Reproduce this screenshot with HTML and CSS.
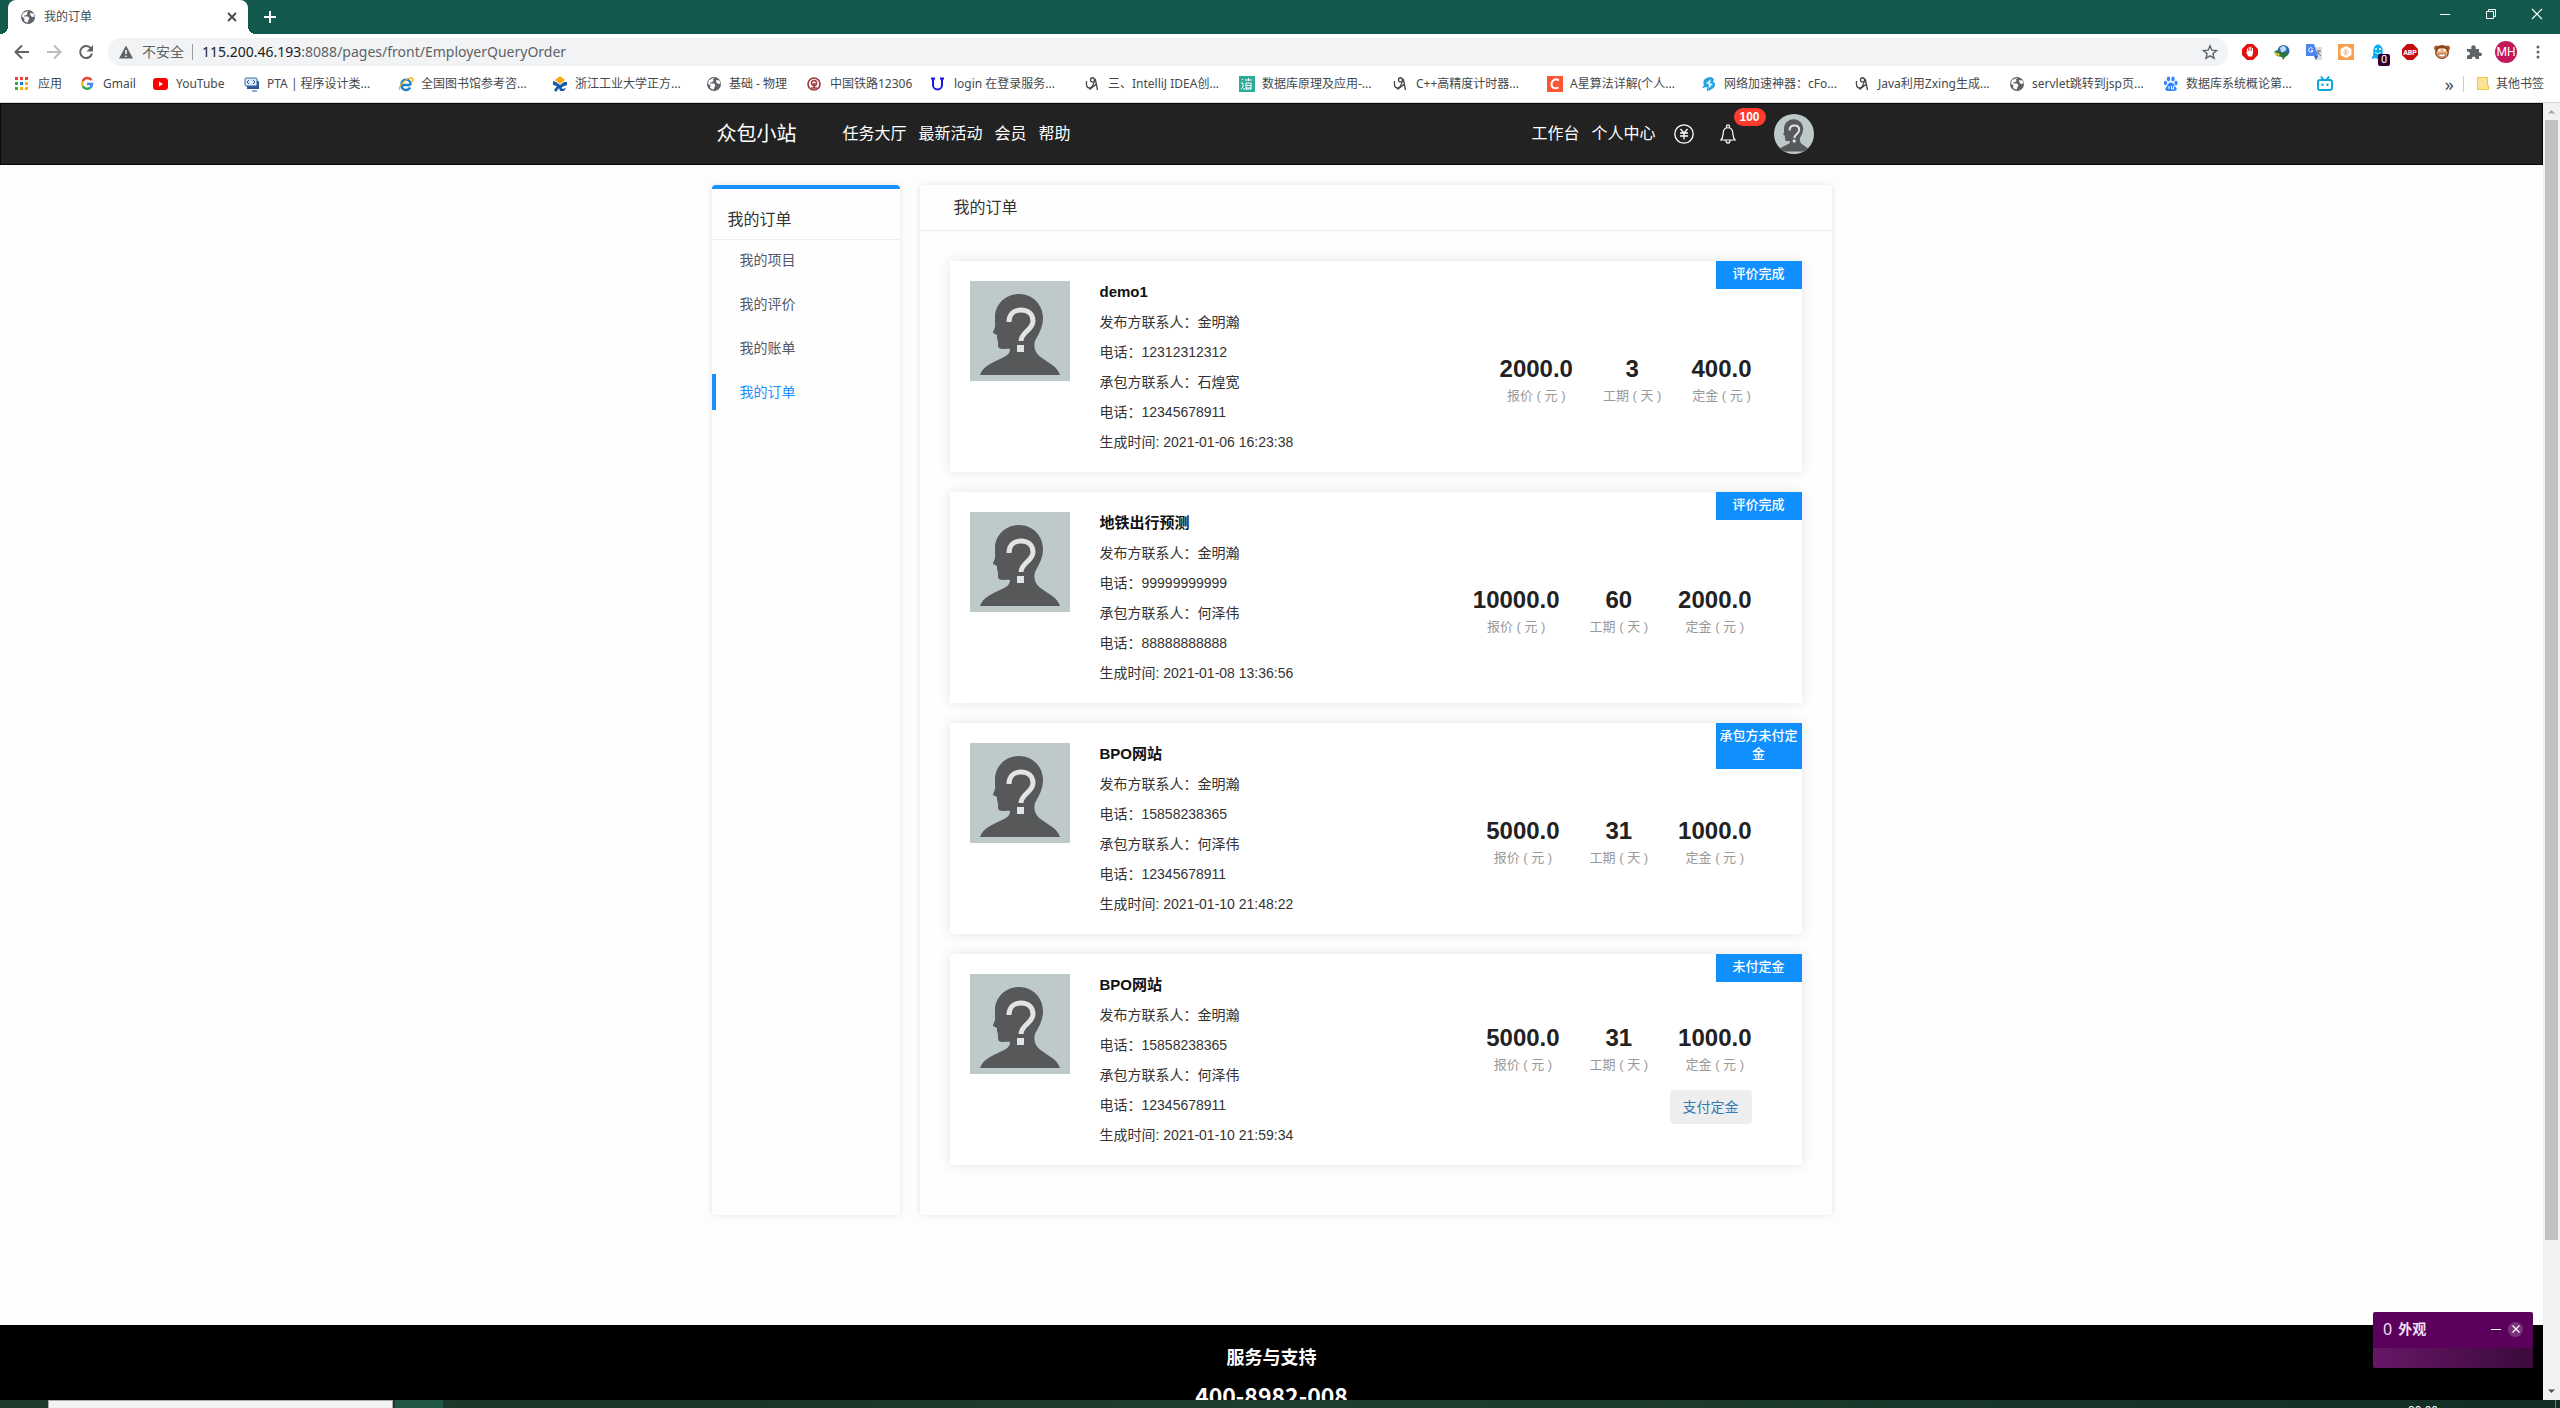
FILE: index.html
```html
<!DOCTYPE html>
<html lang="zh-CN">
<head>
<meta charset="utf-8">
<title>我的订单</title>
<link rel="stylesheet" href="styles.css">
</head>
<body>
<svg class="defs" aria-hidden="true">
  <symbol id="person" viewBox="0 0 100 100">
    <rect width="100" height="100" fill="#becaca"/>
    <path d="M49 13C63 13 73 24 73 37C73 47 68 54 65 60C63 67 66 73 72 77C80 83 87 85 90 94H10C13 85 22 82 32 77C38 74 40 72 40 68C38 67 32 69 29 67C27 65 29 62 27 57L27 54L23 52C23 49 26 47 25 42L25 36C25 24 35 13 49 13z" fill="#57585a"/>
    <path d="M39 41c0-8 5-12 12-12s12 4 12 11c0 9-12 11-12 20" fill="none" stroke="#e2e3e5" stroke-width="5"/>
    <rect x="47" y="64" width="7" height="7" fill="#e2e3e5"/>
  </symbol>
  <symbol id="globe" viewBox="0 0 16 16">
    <circle cx="8" cy="8" r="7" fill="#5f6368"/>
    <path d="M8.500 1.600L7 3.500 7.500 5 5.500 6.500 4 6.500 4 7.500 8 7.500 9.500 9.500 8.500 11 7.500 13.800 4 12 4.500 9.500 1.800 7.500 3 4 5.500 3z M10 4l3.500.5 1 3L12 8l-1.500-1.500z" fill="#fff"/>
  </symbol>
  <symbol id="script" viewBox="0 0 16 16">
    <path d="M1.500 5c-.5 5 .5 7 3 7s4.500-4 5-8c0-3-4-3-4 0 0 2.500 3.500 2.500 5 0l2 10M4.500 13.500l7-5.500" fill="none" stroke="#444" stroke-width="1.300"/>
  </symbol>
</svg>

<header class="tabs">
  <div class="tab">
    <svg class="i16"><use href="#globe"/></svg>
    <span class="tab-title">我的订单</span>
    <button class="plain" aria-label="关闭标签页"><svg class="i16" viewBox="0 0 16 16"><path d="M4 4l8 8M12 4l-8 8" stroke="#45494d" stroke-width="1.800"/></svg></button>
  </div>
  <button class="plain" aria-label="新标签页"><svg class="i16" viewBox="0 0 16 16"><path d="M8 2v12M2 8h12" stroke="#fff" stroke-width="2"/></svg></button>
  <div class="win">
    <button class="plain" aria-label="最小化"><svg viewBox="0 0 12 12"><path d="M1 6.500h10" stroke="#fff"/></svg></button>
    <button class="plain" aria-label="还原"><svg viewBox="0 0 12 12"><path d="M1.500 3.500h7v7h-7zM3.500 3.500v-2h7v7h-2" fill="none" stroke="#fff"/></svg></button>
    <button class="plain" aria-label="关闭"><svg viewBox="0 0 12 12"><path d="M1 1l10 10M11 1L1 11" stroke="#fff" stroke-width="1.200"/></svg></button>
  </div>
</header>

<div class="toolbar">
  <button class="plain nav" aria-label="后退"><svg class="i16" viewBox="0 0 16 16"><path d="M15 8H2M8 1.500L1.500 8 8 14.500" fill="none" stroke="#5f6368" stroke-width="2"/></svg></button>
  <button class="plain nav" aria-label="前进"><svg class="i16" viewBox="0 0 16 16"><path d="M1 8h13M8 1.500L14.500 8 8 14.500" fill="none" stroke="#babcbe" stroke-width="2"/></svg></button>
  <button class="plain nav" aria-label="刷新"><svg class="i16" viewBox="0 0 16 16"><path d="M13 4.500A6 6 0 1 0 14 9.500" fill="none" stroke="#5f6368" stroke-width="2"/><path d="M15 1v6.500H8.500z" fill="#5f6368"/></svg></button>
  <div class="omnibox">
    <svg class="i16" viewBox="0 0 16 16"><path d="M8 1.500L15 14.500H1z" fill="#5f6368"/><path d="M8 6v4M8 11.500v1.500" stroke="#fff" stroke-width="1.500"/></svg>
    <span class="insecure">不安全</span>
    <span class="url"><b>115.200.46.193</b>:8088/pages/front/EmployerQueryOrder</span>
    <svg class="i16" viewBox="0 0 16 16"><path d="M8 1.800l1.800 4.400 4.700.4-3.600 3.100 1.100 4.600-4-2.500-4 2.500 1.100-4.600L1.500 6.600l4.700-.4z" fill="none" stroke="#5f6368" stroke-width="1.400"/></svg>
  </div>
  <div class="exts">
    <svg class="i16" viewBox="0 0 16 16"><path d="M5 0h6l5 5v6l-5 5H5l-5-5V5z" fill="#e3120f"/><path d="M5 8V4.500h1V7h.7V3h1v4h.6V2.800h1V7h.7V4h1v5l-1 3.500H6.500L4 8.500z" fill="#fff"/></svg>
    <svg class="i16" viewBox="0 0 16 16"><circle cx="9.500" cy="7" r="6" fill="#3567b0"/><path d="M6 4c3-3 5-2 6 0s-1 4-5 4z" fill="#b9dff0"/><path d="M0 8c3-3 5-2 6 1l9-1-6 8-1-3-5-1z" fill="#2a7a30"/><path d="M1 8l5 2-1 2-4-1z" fill="#e8b832"/></svg>
    <svg class="i16" viewBox="0 0 16 16"><path d="M6 3h10v13H9z" fill="#dadce0"/><path d="M0 0h8l4 12H0z" fill="#4a85f0"/><path d="M8 12h4l-2 4z" fill="#3566c8"/><path d="M6.500 4.500A2.200 2.200 0 1 0 7 6.500H5" fill="none" stroke="#fff"/><path d="M11 7h4M13 6v1c0 2-1 3-2 4m0-3l4 4" stroke="#70777f" fill="none"/></svg>
    <svg class="i16" viewBox="0 0 16 16"><rect width="16" height="16" fill="#f9a14a"/><path d="M8 2l5.500 3v6L8 14l-5.500-3V5z" fill="#fff"/><path d="M5 9l5-3M6 11l5-3M7 5l1 6" stroke="#f2b577"/></svg>
    <span class="ghost"><svg class="i16" viewBox="0 0 16 16"><path d="M2 13c2-1 1-6 1.500-8 1-6 8-6 9 0 .5 3-.5 7 1.500 8v2l-3-1-3 1-3-1-3 1z" fill="#0aaef2"/><circle cx="6" cy="5" r="1" fill="#fff"/><circle cx="10" cy="5" r="1" fill="#fff"/><path d="M5 8c2 2 4 2 6 0" stroke="#fff" fill="none"/></svg><i>0</i></span>
    <svg class="i16" viewBox="0 0 16 16"><path d="M5 0h6l5 5v6l-5 5H5l-5-5V5z" fill="#c70d0b"/><text x="8" y="10.500" text-anchor="middle" class="abp">ABP</text></svg>
    <svg class="i16" viewBox="0 0 16 16"><circle cx="2.500" cy="4" r="2.500" fill="#b3602b"/><circle cx="13.500" cy="4" r="2.500" fill="#b3602b"/><circle cx="8" cy="8" r="7" fill="#8a4520"/><ellipse cx="8" cy="9" rx="5.500" ry="5" fill="#f0b07a"/><circle cx="5.500" cy="6" r="1.300" fill="#fff"/><circle cx="10.500" cy="6" r="1.300" fill="#fff"/><path d="M4 10h8c-1 4-7 4-8 0z" fill="#fff" stroke="#5a2b12" stroke-width=".6"/></svg>
    <svg class="i16" viewBox="0 0 16 16"><path d="M1 5h4.500C4 0 11 0 9.500 5H13v3.500c4-1 4 4.500 0 3.500V15H9.500c.5-3.500-4-3.500-3.500 0H1v-3.500c4 0 4-4 0-4z" fill="#5f6368"/></svg>
    <span class="account">MH</span>
    <svg class="i16" viewBox="0 0 16 16"><g fill="#5f6368"><circle cx="8" cy="3" r="1.500"/><circle cx="8" cy="8" r="1.500"/><circle cx="8" cy="13" r="1.500"/></g></svg>
  </div>
</div>

<nav class="bookmarks">
  <a href="#" class="w1"><svg class="i16" viewBox="0 0 16 16"><g fill="#ea4335"><path d="M0 1h3v3H0zM5 1h3v3H5zM10 1h3v3h-3z"/></g><path d="M0 6h3v3H0z" fill="#34a853"/><path d="M5 6h3v3H5z" fill="#1a73e8"/><path d="M10 6h3v3h-3zM5 11h3v3H5zM10 11h3v3h-3z" fill="#fbad05"/><path d="M0 11h3v3H0z" fill="#34a853"/></svg>应用</a>
  <a href="#" class="w2"><svg class="i16" viewBox="0 0 16 16" fill="none" stroke-width="2.400"><path d="M11.500 4A5 5 0 0 0 2.700 5.500" stroke="#ea4335"/><path d="M2.700 5.500a5 5 0 0 0 0 4.500" stroke="#fbbc05"/><path d="M2.700 10a5 5 0 0 0 7.500 1.800" stroke="#34a853"/><path d="M10.200 11.800A5 5 0 0 0 12 8H7" stroke="#4285f4"/></svg>Gmail</a>
  <a href="#" class="w3"><svg class="i16" viewBox="0 0 16 16"><rect y="2" width="15" height="12" rx="3" fill="#f00"/><path d="M6 5.500v5L10 8z" fill="#fff"/></svg>YouTube</a>
  <a href="#" class="wide"><svg class="i16" viewBox="0 0 16 16"><rect x="3" y="5" width="12" height="8" fill="#2c5792"/><rect x="1" y="2" width="12" height="8" rx="1" fill="#dce8f5" stroke="#3a6ba8"/><path d="M5 4L3 6l2 2M9 4l2 2-2 2M8 15h5" stroke="#2c5792" fill="none"/></svg>PTA | 程序设计类...</a>
  <a href="#" class="wide"><svg class="i16" viewBox="0 0 16 16" fill="none"><path d="M12.500 9H3.500A4.500 4.500 0 0 1 12.500 7.500V9M12 11.500a4.500 4.500 0 0 1-8.500-2" stroke="#1e7fd0" stroke-width="2.400"/><path d="M2 14C-1 11 9 1 14 2c2 1 0 4-1 5" stroke="#f0b323" stroke-width="1.400"/></svg>全国图书馆参考咨...</a>
  <a href="#" class="wide"><svg class="i16" viewBox="0 0 16 16"><path d="M8 0l5 4-5 4-5-4z" fill="#f8ab13"/><path d="M1 5l3 1 4 3 4-3 3 0v3l-5 2v2l4-1-2 3-4 0-1-3-3 4-2-2 3-4-4-1z" fill="#145ba9"/></svg>浙江工业大学正方...</a>
  <a href="#" class="w4"><svg class="i16"><use href="#globe"/></svg>基础 - 物理</a>
  <a href="#" class="w5"><svg class="i16" viewBox="0 0 16 16" fill="none" stroke="#a13b42" stroke-width="1.700"><circle cx="7" cy="8" r="6"/><circle cx="7" cy="7" r="2.500"/><path d="M7 7v5M4 12h6"/></svg>中国铁路12306</a>
  <a href="#" class="wide"><svg class="i16" viewBox="0 0 16 16"><path d="M2 2v7c0 6 9 6 9 0V2M0 2.500h4M9 2.500h4" fill="none" stroke="#1417e8" stroke-width="2"/></svg>login 在登录服务...</a>
  <a href="#" class="wide"><svg class="i16"><use href="#script"/></svg>三、IntelliJ IDEA创...</a>
  <a href="#" class="wide"><svg class="i16" viewBox="0 0 16 16"><rect width="16" height="16" fill="#2dab98"/><path d="M6 4h7M7 7h5v5H7zM9.500 2v3M7 9.500h5M3 3l1 1M2 7h2v4l-2 2M4 13h9" fill="none" stroke="#fff"/></svg>数据库原理及应用-...</a>
  <a href="#" class="wide"><svg class="i16"><use href="#script"/></svg>C++高精度计时器...</a>
  <a href="#" class="wide"><svg class="i16" viewBox="0 0 16 16"><rect width="16" height="16" fill="#fc5531"/><path d="M12 4.500C8 2 5 4 4.500 8c0 4 3 5 7 3.500" fill="none" stroke="#fff" stroke-width="2"/></svg>A星算法详解(个人...</a>
  <a href="#" class="wide"><svg class="i16" viewBox="0 0 16 16"><path d="M10 1C4 1 1 5 3 9l-2 3 5-1 0 4c5-1 9-4 8-8L12 6l1-3z" fill="#24a3e3"/><path d="M5 7l5-4-1 4 3 1-5 5 1-4z" fill="#c9f1ff"/></svg>网络加速神器：cFo...</a>
  <a href="#" class="wide"><svg class="i16"><use href="#script"/></svg>Java利用Zxing生成...</a>
  <a href="#" class="wide"><svg class="i16"><use href="#globe"/></svg>servlet跳转到jsp页...</a>
  <a href="#" class="wide"><svg class="i16" viewBox="0 0 16 16" fill="#3385ff"><ellipse cx="5.500" cy="3" rx="1.700" ry="2.400"/><ellipse cx="10" cy="3" rx="1.700" ry="2.400"/><ellipse cx="2.500" cy="7" rx="1.600" ry="2.200"/><ellipse cx="13" cy="7" rx="1.600" ry="2.200"/><path d="M8 6.500c3 0 3 3 5 5s0 4-5 3.500c-5 .5-7-1-5-3.500s2-5 5-5z"/><path d="M6 10v3M8.500 10v3h2v-3" fill="none" stroke="#fff"/></svg>数据库系统概论第...</a>
  <a href="#" aria-label="bilibili"><svg class="i16" viewBox="0 0 16 16" fill="none" stroke="#0ca6dd" stroke-width="2"><rect x="1" y="4" width="14" height="10" rx="2"/><path d="M4 .5L6.500 4M12 .5L9.500 4M5.500 7.500V10M10.500 7.500V10"/></svg></a>
  <span class="more">»</span>
  <a href="#" class="others"><svg class="i16" viewBox="0 0 16 16"><path d="M2.500 1.500h10v8h1v4h-11z" fill="#fde293" stroke="#f0c83c"/></svg>其他书签</a>
</nav>

<div class="window">
  <div class="page">
    <header class="site">
      <div class="wrap">
        <a href="#" class="brand">众包小站</a>
        <nav class="links"><a href="#">任务大厅</a><a href="#">最新活动</a><a href="#">会员</a><a href="#">帮助</a></nav>
        <nav class="links user"><a href="#">工作台</a><a href="#">个人中心</a></nav>
        <a href="#" class="coin" aria-label="钱包"><svg viewBox="0 0 20 20" fill="none" stroke="#fff" stroke-width="1.300"><circle cx="10" cy="10" r="9.200"/><path d="M6.500 5L10 9l3.500-4M6 9h8M6 12h8M10 9v6.500"/></svg></a>
        <a href="#" class="bell" aria-label="消息"><svg viewBox="0 0 20 20" fill="none" stroke="#fff" stroke-width="1.200"><path d="M8.500 3.500V2c0-1.500 3-1.500 3 0v1.500M3 16c2-2 2-4 2.200-7C5.500 2 14.500 2 14.800 9c.2 3 .2 5 2.200 7zM8 16.500c0 3.500 4 3.500 4 0"/></svg><span class="badge">100</span></a>
        <a href="#" class="me" aria-label="我"><svg><use href="#person"/></svg></a>
      </div>
    </header>

    <div class="columns">
      <aside class="side">
        <h2>我的订单</h2>
        <a href="#">我的项目</a>
        <a href="#">我的评价</a>
        <a href="#">我的账单</a>
        <a href="#" class="on">我的订单</a>
      </aside>
      <main class="main">
        <h1>我的订单</h1>
        <div class="orders">
          <article class="card">
            <svg class="face"><use href="#person"/></svg>
            <div class="info">
              <h3>demo1</h3>
              <p>发布方联系人：金明瀚</p>
              <p>电话：12312312312</p>
              <p>承包方联系人：石煌宽</p>
              <p>电话：12345678911</p>
              <p>生成时间: 2021-01-06 16:23:38</p>
            </div>
            <div class="deal">
              <dl><div><dd>2000.0</dd><dt>报价 ( 元 )</dt></div><div><dd>3</dd><dt>工期 ( 天 )</dt></div><div><dd>400.0</dd><dt>定金 ( 元 )</dt></div></dl>
            </div>
            <span class="state">评价完成</span>
          </article>
          <article class="card">
            <svg class="face"><use href="#person"/></svg>
            <div class="info">
              <h3>地铁出行预测</h3>
              <p>发布方联系人：金明瀚</p>
              <p>电话：99999999999</p>
              <p>承包方联系人：何泽伟</p>
              <p>电话：88888888888</p>
              <p>生成时间: 2021-01-08 13:36:56</p>
            </div>
            <div class="deal">
              <dl><div><dd>10000.0</dd><dt>报价 ( 元 )</dt></div><div><dd>60</dd><dt>工期 ( 天 )</dt></div><div><dd>2000.0</dd><dt>定金 ( 元 )</dt></div></dl>
            </div>
            <span class="state">评价完成</span>
          </article>
          <article class="card">
            <svg class="face"><use href="#person"/></svg>
            <div class="info">
              <h3>BPO网站</h3>
              <p>发布方联系人：金明瀚</p>
              <p>电话：15858238365</p>
              <p>承包方联系人：何泽伟</p>
              <p>电话：12345678911</p>
              <p>生成时间: 2021-01-10 21:48:22</p>
            </div>
            <div class="deal">
              <dl><div><dd>5000.0</dd><dt>报价 ( 元 )</dt></div><div><dd>31</dd><dt>工期 ( 天 )</dt></div><div><dd>1000.0</dd><dt>定金 ( 元 )</dt></div></dl>
            </div>
            <span class="state">承包方未付定金</span>
          </article>
          <article class="card">
            <svg class="face"><use href="#person"/></svg>
            <div class="info">
              <h3>BPO网站</h3>
              <p>发布方联系人：金明瀚</p>
              <p>电话：15858238365</p>
              <p>承包方联系人：何泽伟</p>
              <p>电话：12345678911</p>
              <p>生成时间: 2021-01-10 21:59:34</p>
            </div>
            <div class="deal">
              <dl><div><dd>5000.0</dd><dt>报价 ( 元 )</dt></div><div><dd>31</dd><dt>工期 ( 天 )</dt></div><div><dd>1000.0</dd><dt>定金 ( 元 )</dt></div></dl>
              <button class="pay">支付定金</button>
            </div>
            <span class="state">未付定金</span>
          </article>
        </div>
      </main>
    </div>

    <footer class="foot">
      <h4>服务与支持</h4>
      <p>400-8982-008</p>
    </footer>
  </div>
  <div class="scroll">
    <svg viewBox="0 0 17 17"><path d="M5 10.500L8.500 7l3.500 3.500z" fill="#a3a3a3"/></svg>
    <div class="thumb"></div>
    <svg viewBox="0 0 17 17"><path d="M5 6.500h7L8.500 10z" fill="#505050"/></svg>
  </div>
  <div class="tracker">
    <div class="tracker-head">
      <span class="count">0</span><span>外观</span>
      <button class="plain mini" aria-label="最小化"><svg viewBox="0 0 10 10"><path d="M0 5.500h10" stroke="#fff"/></svg></button>
      <button class="plain shut" aria-label="关闭"><svg viewBox="0 0 10 10"><path d="M1.500 1.500l7 7M8.500 1.500l-7 7" stroke="#fff" stroke-width="1.200"/></svg></button>
    </div>
    <div class="tracker-body"></div>
  </div>
</div>

<div class="taskbar">
  <div class="search"></div>
  <div class="task"></div>
  <div class="clock">20:00</div>
  <div class="desk"></div>
</div>
</body>
</html>
```
FILE: styles.css
```css
* { box-sizing: border-box; }
body {
  margin: 0;
  height: 100vh;
  display: flex;
  flex-direction: column;
  overflow: hidden;
  background: #fff;
  font: 14px/20px "Liberation Sans", "Noto Sans CJK SC", sans-serif;
  color: #333;
}
a { color: inherit; text-decoration: none; }
h1, h2, h3, h4, p, dl, dd { margin: 0; }
svg { display: block; flex: none; }
.defs { position: absolute; width: 0; height: 0; }
.i16 { width: 16px; height: 16px; }
.plain { border: 0; padding: 0; background: none; display: flex; align-items: center; justify-content: center; }

/* browser frame */
.tabs, .toolbar, .bookmarks {
  display: flex;
  align-items: center;
  flex: none;
  font-family: "Noto Sans", "Noto Sans CJK SC", sans-serif;
}
.tabs { height: 34px; background: #13584d; padding-left: 8px; }
.tab {
  position: relative;
  display: flex;
  align-items: center;
  width: 240px;
  height: 34px;
  padding: 0 8px 0 12px;
  margin-right: 14px;
  gap: 8px;
  background: #fff;
  border-radius: 8px 8px 0 0;
  font-size: 12px;
  color: #45494d;
}
.tab::before, .tab::after {
  content: "";
  position: absolute;
  bottom: 0;
  width: 8px;
  height: 8px;
}
.tab::before { right: 100%; background: radial-gradient(circle at 0 0, #13584d 8px, #fff 8px); }
.tab::after { left: 100%; background: radial-gradient(circle at 100% 0, #13584d 8px, #fff 8px); }
.tab-title { flex: 1; }
.win { margin-left: auto; display: flex; align-self: flex-start; }
.win .plain { width: 46px; height: 28px; }
.win svg { width: 12px; height: 12px; }
.toolbar { padding: 4px 14px 3px 6px; }
.nav { width: 32px; height: 28px; }
.omnibox {
  flex: 1;
  display: flex;
  align-items: center;
  height: 28px;
  margin: 0 14px 0 6px;
  padding: 0 10px;
  border-radius: 14px;
  background: #f1f3f4;
  color: #5f6368;
}
.insecure { padding: 0 8px; margin-right: 9px; line-height: 16px; border-right: 1px solid #9a9da0; }
.url { flex: 1; }
.url b { font-weight: normal; color: #202124; }
.exts { display: flex; align-items: center; gap: 16px; }
.ghost { position: relative; }
.ghost i {
  position: absolute;
  left: 8px;
  top: 10px;
  width: 12px;
  font: 11px/12px Roboto, sans-serif;
  text-align: center;
  color: #fff;
  background: #330033;
  border-radius: 2px;
}
.abp { font: bold 7px Roboto, sans-serif; fill: #fff; }
.account {
  width: 22px;
  margin: 0 -3px;
  border-radius: 50%;
  background: #c2185b;
  color: #fff;
  text-align: center;
  font: 12px/22px Roboto, sans-serif;
}
.bookmarks {
  height: 34px;
  padding: 0 16px 4px 15px;
  gap: 18px;
  border-bottom: 1px solid #d5d7d9;
  font-size: 12px;
  color: #45494d;
}
.bookmarks a { display: flex; align-items: center; gap: 7px; white-space: nowrap; }
.w1 { width: 47px; }
.w2 { width: 55px; }
.w3 { width: 73px; }
.w4 { width: 83px; }
.w5 { width: 106px; }
.wide { width: 136px; }
.more { margin-left: auto; margin-right: -9px; font-size: 18px; }
.bookmarks .others { padding-left: 11px; border-left: 1px solid #ccc; gap: 5px; line-height: 16px; }

/* web page area */
.window { position: relative; flex: 1; min-height: 0; display: flex; overflow: hidden; }
.page { flex: 1; background: #fdfdfd; }
.site { background: #222; border: 1px solid #090909; color: #fff; }
.wrap { display: flex; align-items: center; max-width: 1120px; height: 60px; margin: 0 auto; padding: 0 18px 0 5px; }
.brand { font-size: 20px; margin-right: 46px; }
.links { display: flex; gap: 12px; font-size: 16px; }
.user { margin-left: auto; }
.coin { margin: 0 24px 0 18px; }
.coin svg, .bell svg { width: 20px; height: 20px; }
.bell { position: relative; margin-right: 36px; }
.badge {
  position: absolute;
  left: 16px;
  top: -16px;
  padding: 0 6px;
  border-radius: 9px;
  background: #ff3b30;
  font: bold 12px/18px "Liberation Sans", sans-serif;
}
.me svg { width: 40px; height: 40px; border-radius: 50%; }
.columns { display: flex; gap: 20px; max-width: 1120px; margin: 20px auto 110px; }
.side, .main { background: #fefefe; border-radius: 4px; box-shadow: 0 0 6px rgba(0, 0, 0, .1); }
.side { width: 188px; border-top: 4px solid #1890ff; }
.side h2 { padding: 20px 16px 8px; border-bottom: 1px solid #eee; font-weight: normal; font-size: 16px; line-height: 22px; }
.side a {
  display: block;
  margin-bottom: 8px;
  padding-left: 24px;
  border-left: 4px solid transparent;
  line-height: 36px;
  color: #50596b;
}
.side h2 + a { margin-top: 2px; }
.side .on { border-color: #1890ff; color: #1890ff; }
.main { flex: 1; }
.main h1 { padding: 0 34px; border-bottom: 1px solid #eee; font-weight: normal; font-size: 16px; line-height: 45px; }
.orders { display: flex; flex-direction: column; gap: 20px; padding: 30px 30px 50px; }
.card { position: relative; display: flex; padding: 16px 50px 15px 20px; background: #fff; box-shadow: 0 0 12px rgba(0, 0, 0, .1); }
.face { width: 100px; height: 100px; margin: 4px 30px 0 0; }
.info { flex: 1; line-height: 30px; }
.info h3 { font-size: 15px; line-height: 30px; color: #111; }
.deal { display: flex; flex-direction: column; align-items: flex-end; justify-content: center; padding-top: 24px; }
.deal dl { display: flex; gap: 30px; text-align: center; }
.deal dl div { display: flex; flex-direction: column; }
.deal dd { font-weight: bold; font-size: 24px; line-height: 34px; color: #222; }
.deal dt { font-size: 13px; line-height: 20px; color: #999; }
.pay { margin-top: 15px; padding: 7px 13px; border: 0; border-radius: 4px; background: #eee; color: #337ab7; font: inherit; }
.state {
  position: absolute;
  right: 0;
  top: 0;
  width: 86px;
  padding: 4px 4px 6px;
  background: #108fff;
  color: #fff;
  font-size: 13px;
  font-weight: 500;
  line-height: 18px;
  text-align: center;
}
.foot { padding-top: 19px; background: #000; color: #fff; text-align: center; font-weight: bold; font-family: "Noto Sans CJK SC", sans-serif; }
.foot h4 { font-size: 18px; line-height: 24px; }
.foot p { padding: 12px 0 40px; font-size: 23px; line-height: 30px; }

.scroll { display: flex; flex-direction: column; width: 17px; padding: 0 2px 0 2px; background: #f1f1f1; }
.scroll svg { width: 17px; height: 17px; margin-left: -2px; }
.thumb { flex: 1; margin-bottom: 143px; background: #c1c1c1; }
.tracker { position: absolute; right: 27px; bottom: 32px; width: 160px; border-radius: 2px; overflow: hidden; color: #f2dff2; }
.tracker-head { display: flex; align-items: center; height: 36px; padding: 0 10px 2px; background: #5b005b; font-weight: bold; }
.count { margin-right: 6px; font: 16px/20px "Noto Sans", sans-serif; }
.mini { margin-left: auto; margin-right: 7px; }
.mini svg, .shut svg { width: 10px; height: 10px; }
.shut { width: 15px; height: 15px; border-radius: 50%; background: #7c337c; }
.tracker-body { height: 20px; background: linear-gradient(80deg, #671767, #3b0a3b); }

.taskbar { flex: none; display: flex; height: 8px; overflow: hidden; background: linear-gradient(90deg, #1e3a2c, #1a3527 30%, #203f30 50%, #122d24); }
.search { width: 345px; margin: 0 2px 0 48px; background: #f1f3f2; border: 1px solid #aaa; border-bottom: 0; }
.task { width: 48px; background: #1f5646; }
.clock { margin: 4px 117px 0 auto; font-size: 12px; line-height: 14px; color: #fff; }
.desk { width: 5px; border-left: 1px solid #6f8079; }
```
